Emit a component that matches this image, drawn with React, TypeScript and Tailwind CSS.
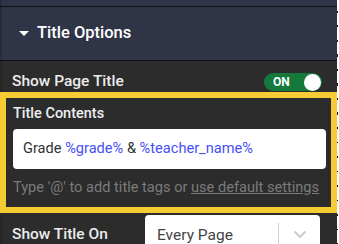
import React from "react";

export default function App() {
  return (
    <div className="flex w-[339px] h-[244px] overflow-hidden bg-white" style={{ fontFamily: "Roboto, 'Liberation Sans', sans-serif" }}>
      <div className="w-[337px] h-[244px] flex flex-col bg-[#2c2c2c] shrink-0 overflow-hidden">
        <div className="h-[6px] shrink-0 bg-[#2f3447] border-l-2 border-[#272b3a]" />
        <div className="h-px shrink-0 bg-[#111111]" />
        <div className="h-[53px] shrink-0 flex items-center bg-[#2f3447] border-l-2 border-[#272b3a] pl-[17px]">
          <div className="w-0 h-0 border-l-[5px] border-r-[5px] border-t-[5px] border-l-transparent border-r-transparent border-t-white" />
          <span className="ml-[8px] text-[16.5px] font-medium text-white">Title Options</span>
        </div>
        <div className="h-px shrink-0 bg-[#111111]" />
        <div className="h-[31px] shrink-0 border-l-2 border-[#252525] pt-[12px] pl-[10px] pr-[15px] flex items-start">
          <div className="h-[18px] flex items-center justify-between w-full">
            <span className="text-[15.5px] font-medium text-[#ececec]">Show Page Title</span>
            <div className="w-[58px] h-[18px] rounded-full bg-[#137a3c] flex items-center pl-[9px] pr-[1px] justify-between">
              <span className="text-[12px] font-bold text-white">ON</span>
              <div className="w-[17px] h-[17px] rounded-full bg-white" />
            </div>
          </div>
        </div>
        <div className="h-[121px] shrink-0 border-[6px] border-[#f5cc33] bg-[#2c2c2c] flex flex-col pl-[7px]">
          <div className="mt-[8px] text-[14.5px] leading-[16px] font-medium text-[#eeeeee]">Title Contents</div>
          <div className="mt-[7px] w-[313px] h-[40px] shrink-0 bg-white rounded-[4px] flex items-center pl-[10px] text-[14.6px] text-[#333333]">
            <span>Grade&nbsp;</span>
            <span className="text-[#4650f5]">%grade%</span>
            <span>&nbsp;&amp;&nbsp;</span>
            <span className="text-[#4650f5]">%teacher_name%</span>
          </div>
          <div className="mt-[10px] text-[14.6px] leading-[16px] text-[#7b7b7b] whitespace-nowrap">
            Type '@' to add title tags or <span className="underline">use default settings</span>
          </div>
        </div>
        <div className="h-[40px] shrink-0 flex border-l-2 border-[#252525] mt-[2px]">
          <div className="w-[143px] pl-[10px] pt-[8px] text-[15.5px] font-medium text-[#ececec]">Show Title On</div>
          <div className="w-[175px] h-[40px] bg-white rounded-t-[4px] flex">
            <div className="flex-1 pl-[12px] pt-[9px] text-[15.5px] text-[#444444]">Every Page</div>
            <div className="w-px bg-[#cfcfcf] mt-[8px]" />
            <div className="w-[41px] flex justify-center pt-[15px]">
              <svg width="14" height="9" viewBox="0 0 14 9" fill="none">
                <path d="M1.5 1.5 L7 7 L12.5 1.5" stroke="#c9c9c9" strokeWidth="1.8" />
              </svg>
            </div>
          </div>
        </div>
      </div>
      <div className="w-[2px] h-full bg-white flex">
        <div className="w-px h-full bg-[repeating-linear-gradient(to_bottom,transparent_0px,transparent_11px,#111_11px,#111_13px,transparent_13px,transparent_14.5px)]" />
      </div>
    </div>
  );
}
